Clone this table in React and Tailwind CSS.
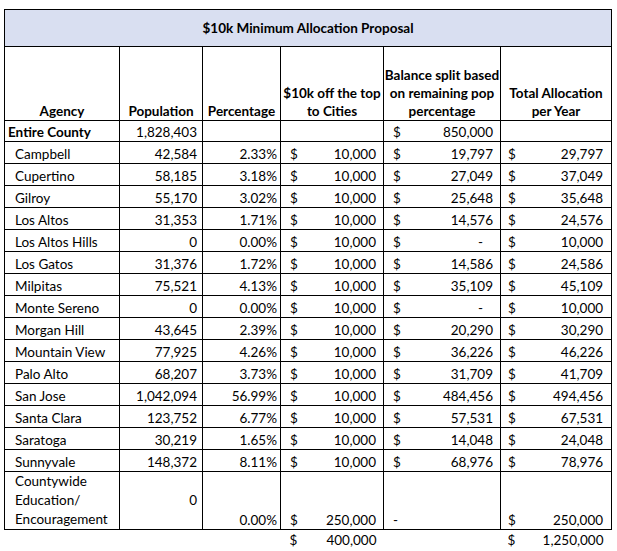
import React from "react";

const rows = [
  ["Campbell", "42,584", "2.33%", "10,000", "19,797", "29,797"],
  ["Cupertino", "58,185", "3.18%", "10,000", "27,049", "37,049"],
  ["Gilroy", "55,170", "3.02%", "10,000", "25,648", "35,648"],
  ["Los Altos", "31,353", "1.71%", "10,000", "14,576", "24,576"],
  ["Los Altos Hills", "0", "0.00%", "10,000", "-", "10,000"],
  ["Los Gatos", "31,376", "1.72%", "10,000", "14,586", "24,586"],
  ["Milpitas", "75,521", "4.13%", "10,000", "35,109", "45,109"],
  ["Monte Sereno", "0", "0.00%", "10,000", "-", "10,000"],
  ["Morgan Hill", "43,645", "2.39%", "10,000", "20,290", "30,290"],
  ["Mountain View", "77,925", "4.26%", "10,000", "36,226", "46,226"],
  ["Palo Alto", "68,207", "3.73%", "10,000", "31,709", "41,709"],
  ["San Jose", "1,042,094", "56.99%", "10,000", "484,456", "494,456"],
  ["Santa Clara", "123,752", "6.77%", "10,000", "57,531", "67,531"],
  ["Saratoga", "30,219", "1.65%", "10,000", "14,048", "24,048"],
  ["Sunnyvale", "148,372", "8.11%", "10,000", "68,976", "78,976"],
];

const cell = "border border-black align-bottom p-0 leading-[18px]";

// accounting style cell: "$" pinned left, amount right
const Money = ({ value, left = "pl-[9px]", right = "pr-[7px]" }) => (
  <div className={`flex justify-between ${left} ${right}`}>
    <span>$</span>
    <span className={value === "-" ? "pr-[10px]" : ""}>{value}</span>
  </div>
);

export default function App() {
  return (
    <div className="bg-white w-[617px] h-[551px] pt-[9px] pl-[4px] text-black text-[13.5px] font-['Lato','Open_Sans',sans-serif]">
      <table className="table-fixed border-collapse w-[607px]">
        <colgroup>
          <col className="w-[115px]" />
          <col className="w-[83px]" />
          <col className="w-[78px]" />
          <col className="w-[103px]" />
          <col className="w-[117px]" />
          <col className="w-[111px]" />
        </colgroup>
        <tbody>
          <tr className="h-[37px] bg-[#d9dff1]">
            <td colSpan={6} className="border border-black text-center font-bold align-middle">
              $10k Minimum Allocation Proposal
            </td>
          </tr>
          <tr className="h-[74px] font-bold text-center whitespace-nowrap">
            <td className={cell}>Agency</td>
            <td className={cell}>Population</td>
            <td className={cell}>Percentage</td>
            <td className={cell}>
              $10k off the top
              <br />
              to Cities
            </td>
            <td className={cell}>
              Balance split based
              <br />
              on remaining pop
              <br />
              percentage
            </td>
            <td className={cell}>
              Total Allocation
              <br />
              per Year
            </td>
          </tr>
          <tr className="h-[21px]">
            <td className={`${cell} font-bold pl-[3px]`}>Entire County</td>
            <td className={`${cell} text-right pr-[5px]`}>1,828,403</td>
            <td className={cell}></td>
            <td className={cell}></td>
            <td className={cell}>
              <Money value="850,000" />
            </td>
            <td className={cell}></td>
          </tr>
          {rows.map(([name, pop, pct, top, bal, total]) => (
            <tr key={name} className="h-[22px]">
              <td className={`${cell} pl-[10px]`}>{name}</td>
              <td className={`${cell} text-right pr-[5px]`}>{pop}</td>
              <td className={`${cell} text-right pr-[3px]`}>{pct}</td>
              <td className={cell}>
                <Money value={top} />
              </td>
              <td className={cell}>
                <Money value={bal} />
              </td>
              <td className={cell}>
                <Money value={total} left="pl-[7px]" right="pr-[8px]" />
              </td>
            </tr>
          ))}
          <tr className="h-[58px]">
            <td className="border border-black align-bottom p-0 leading-[19px] pl-[10px]">
              Countywide
              <br />
              Education/
              <br />
              Encouragement
            </td>
            <td className="border border-black p-0 align-middle text-right pr-[5px]">0</td>
            <td className={`${cell} text-right pr-[3px]`}>0.00%</td>
            <td className={cell}>
              <Money value="250,000" />
            </td>
            <td className={`${cell} pl-[9px]`}>-</td>
            <td className={cell}>
              <Money value="250,000" left="pl-[7px]" right="pr-[8px]" />
            </td>
          </tr>
          <tr className="h-[19px]">
            <td></td>
            <td></td>
            <td></td>
            <td className="p-0 pt-[1px] align-top leading-[18px]">
              <Money value="400,000" />
            </td>
            <td></td>
            <td className="p-0 pt-[1px] align-top leading-[18px]">
              <Money value="1,250,000" left="pl-[7px]" right="pr-[8px]" />
            </td>
          </tr>
        </tbody>
      </table>
    </div>
  );
}
